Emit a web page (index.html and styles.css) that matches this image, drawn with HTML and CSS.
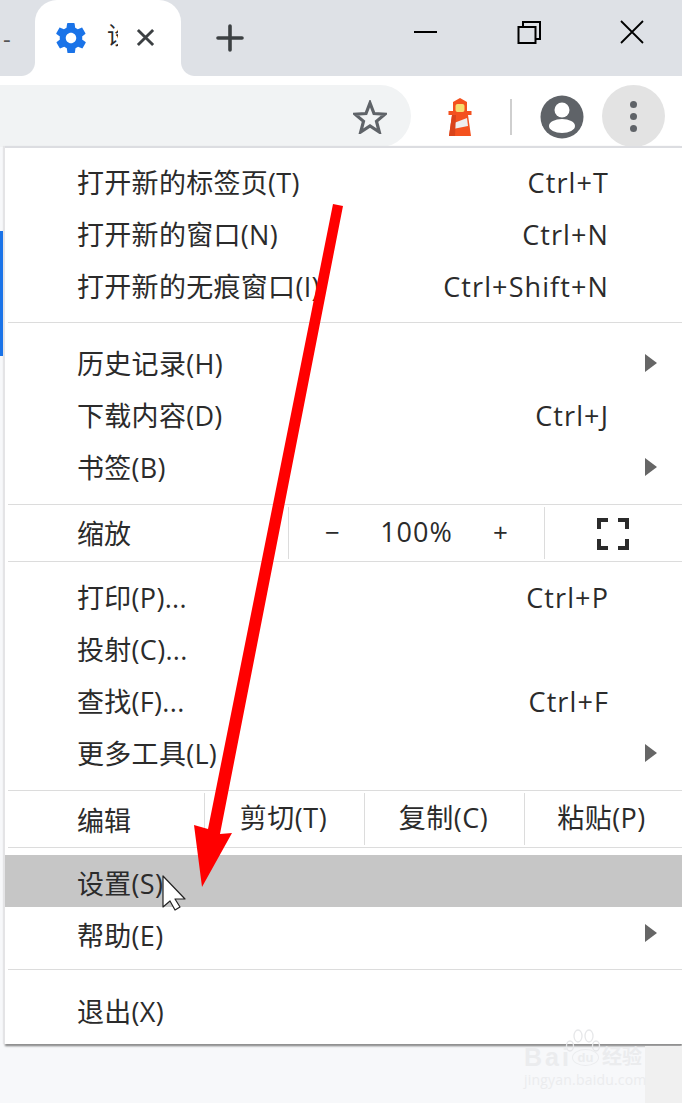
FILE: index.html
```html
<!DOCTYPE html>
<html lang="zh-CN">
<head>
  <meta charset="UTF-8">
  <title>Chrome 菜单</title>
  <link rel="stylesheet" href="styles.css">
</head>
<body>
  <div class="page">
    <div class="tabstrip">
      <div class="tab-stub">-</div>
      <div class="tab">
        <svg class="tab-gear" viewBox="0 0 24 24"><path fill="#1a73e8" d="M19.4 13c.1-.3.1-.7.1-1s0-.7-.1-1l2.100-1.600c.2-.2.2-.4.100-.6l-2-3.500c-.1-.2-.4-.3-.6-.2l-2.500 1c-.5-.4-1.100-.7-1.700-1l-.4-2.700c0-.2-.2-.4-.5-.4h-4c-.2 0-.4.2-.5.4l-.4 2.700c-.6.2-1.200.6-1.700 1l-2.500-1c-.2-.1-.5 0-.6.2l-2 3.500c-.1.2-.1.5.1.6L4.600 11c-.1.3-.1.700-.1 1s0 .7.1 1l-2.100 1.600c-.2.2-.2.4-.1.6l2 3.500c.1.2.4.3.6.2l2.500-1c.5.4 1.100.7 1.700 1l.4 2.700c0 .2.2.4.5.4h4c.2 0 .4-.2.5-.4l.4-2.700c.6-.2 1.200-.6 1.700-1l2.500 1c.2.1.5 0 .6-.2l2-3.500c.1-.2.1-.5-.1-.6zM12 15.500c-1.900 0-3.500-1.600-3.500-3.500s1.600-3.500 3.500-3.500 3.500 1.600 3.500 3.500-1.600 3.500-3.500 3.500z"/></svg>
        <span class="tab-title">设置</span>
        <svg class="tab-close" viewBox="0 0 20 20"><path d="M2 2l16 16M18 2L2 18" stroke="#3c4043" stroke-width="3"/></svg>
      </div>
      <svg class="new-tab" viewBox="0 0 28 28"><path d="M14 2v24M2 14h24" stroke="#3c4043" stroke-width="3.600" stroke-linecap="round"/></svg>
      <div class="win-btns">
        <svg class="win-btn" viewBox="0 0 24 24"><path d="M0 12h23" stroke="#000" stroke-width="2"/></svg>
        <svg class="win-btn" viewBox="0 0 24 24"><path d="M1.500 7h17v16h-17zM6 7V2h17v17h-4.500" fill="none" stroke="#000" stroke-width="2"/></svg>
        <svg class="win-btn" viewBox="0 0 24 24"><path d="M1 1l22 22M23 1L1 23" stroke="#000" stroke-width="1.800"/></svg>
      </div>
    </div>

    <div class="toolbar">
      <div class="omnibox">
        <svg class="star" viewBox="0 0 34 34"><path d="M17 3l4 10.500 11 .7-8.500 7.100 2.800 10.700L17 26l-9.300 6 2.800-10.700L2 14.200l11-.7z" fill="none" stroke="#5f6368" stroke-width="3.200"/></svg>
      </div>
      <svg class="lighthouse" viewBox="0 0 26 38">
        <path fill="#f4511e" d="M13 0l7 4v9h4.500v4H21l3 21H2l3-21H1.500v-4H6V4z"/>
        <rect x="8.500" y="6" width="9" height="8" rx="2" fill="#f6dd6e"/>
        <path fill="#eeeeee" d="M7 25l13-5 1 8-15 3z"/>
        <path fill="#d9431a" d="M5 17h4l-1 21H2z"/>
      </svg>
      <div class="tool-sep"></div>
      <svg class="avatar" viewBox="0 0 44 44"><circle cx="22" cy="22" r="21.500" fill="#5f6368"/><circle cx="22" cy="15" r="7.500" fill="#fff"/><ellipse cx="22" cy="31" rx="13" ry="7" fill="#fff"/></svg>
      <div class="menu-btn"><i></i><i></i><i></i></div>
    </div>

    <div class="menu">
      <div class="group first">
        <div class="item"><span>打开新的标签页(T)</span><span class="key">Ctrl+T</span></div>
        <div class="item"><span>打开新的窗口(N)</span><span class="key">Ctrl+N</span></div>
        <div class="item"><span>打开新的无痕窗口(I)</span><span class="key">Ctrl+Shift+N</span></div>
      </div>
      <div class="group history">
        <div class="item sub"><span>历史记录(H)</span></div>
        <div class="item"><span>下载内容(D)</span><span class="key">Ctrl+J</span></div>
        <div class="item sub"><span>书签(B)</span></div>
      </div>
      <div class="tool-row">
        <div class="tool-label">缩放</div>
        <div class="zoom-ctrl"><span class="zoom-sign">−</span><span class="zoom-value">100%</span><span class="zoom-sign">+</span></div>
        <div class="zoom-full">
          <svg viewBox="0 0 32 32"><path d="M2 11V2h9M21 2h9v9M2 21v9h9M21 30h9v-9" fill="none" stroke="#2b2b2b" stroke-width="4"/></svg>
        </div>
      </div>
      <div class="group print">
        <div class="item"><span>打印(P)...</span><span class="key">Ctrl+P</span></div>
        <div class="item"><span>投射(C)...</span></div>
        <div class="item"><span>查找(F)...</span><span class="key">Ctrl+F</span></div>
        <div class="item sub"><span>更多工具(L)</span></div>
      </div>
      <div class="tool-row edit-row">
        <div class="tool-label">编辑</div>
        <div class="edit-btn">剪切(T)</div>
        <div class="edit-btn">复制(C)</div>
        <div class="edit-btn paste">粘贴(P)</div>
      </div>
      <div class="group settings">
        <div class="item active"><span>设置(S)</span></div>
        <div class="item sub"><span>帮助(E)</span></div>
      </div>
      <div class="group last">
        <div class="item"><span>退出(X)</span></div>
      </div>
    </div>

    <div class="blue-edge"></div>
    <div class="corner-patch"></div>

    <div class="watermark">
      <svg class="paw" viewBox="0 0 36 30" fill="none" stroke="#e6e7e9" stroke-width="1.300">
        <ellipse cx="5" cy="17" rx="3.500" ry="5"/><ellipse cx="13" cy="7" rx="4" ry="6"/><ellipse cx="24" cy="7" rx="4" ry="6"/><ellipse cx="31" cy="17" rx="3.500" ry="5"/>
      </svg>
      <div class="wm-main"><span class="wm-bai">Bai</span><span class="wm-du">du</span><span>经验</span></div>
      <div class="wm-url">jingyan.baidu.com</div>
    </div>

    <svg class="annotation" viewBox="0 0 682 1103">
      <polygon fill="#ff0000" points="333,204 343,206 220,834 232,833 202,887 194,825 208,829"/>
    </svg>
    <svg class="cursor" viewBox="0 0 27 36"><path d="M1 1v31l7-6 5 9 5-3-5-8h10z" fill="#fff" stroke="#222" stroke-width="1.200" stroke-linejoin="round"/></svg>
  </div>
</body>
</html>
```

FILE: styles.css
```css
* {
  box-sizing: border-box;
}
html, body {
  margin: 0;
  padding: 0;
}
body {
  font-family: "Open Sans", "Noto Sans CJK SC", sans-serif;
  color: #2b2b2b;
}
.page {
  position: relative;
  width: 682px;
  height: 1103px;
  overflow: hidden;
  background: #f7f8fa;
}

/* tab strip */
.tabstrip {
  height: 76px;
  background: #dee1e6;
  display: flex;
  align-items: flex-start;
}
.tab-stub {
  width: 35px;
  padding: 20px 0 0 3px;
  font-size: 24px;
  line-height: 38px;
  color: #555;
}
.tab {
  width: 146px;
  height: 76px;
  background: #fff;
  border-radius: 22px 22px 0 0;
  display: flex;
  align-items: flex-start;
  position: relative;
}
/* concave feet either side of the active tab */
.tab::before, .tab::after {
  content: "";
  position: absolute;
  bottom: 0;
  width: 14px;
  height: 14px;
}
.tab::before {
  left: -14px;
  background: radial-gradient(circle at 0 0, #dee1e6 13.5px, #fff 14.5px);
}
.tab::after {
  right: -14px;
  background: radial-gradient(circle at 100% 0, #dee1e6 13.5px, #fff 14.5px);
}
.tab-gear {
  width: 36px;
  height: 36px;
  margin: 20px 0 0 18px;
}
.tab-title {
  width: 11px;
  margin: 17px 0 0 18px;
  overflow: hidden;
  white-space: nowrap;
  font-size: 24px;
  line-height: 36px;
}
.tab-close {
  width: 19px;
  height: 19px;
  margin: 28px 0 0 18px;
}
.new-tab {
  width: 28px;
  height: 28px;
  margin: 24px 0 0 35px;
}
.win-btns {
  margin-left: 170px;
  display: flex;
  gap: 79px;
  padding-top: 20px;
}
.win-btn {
  width: 24px;
  height: 24px;
}

/* toolbar */
.toolbar {
  height: 70px;
  background: #fff;
  display: flex;
  align-items: flex-start;
}
.omnibox {
  width: 411px;
  height: 62px;
  margin-top: 9px;
  background: #f1f3f4;
  border-radius: 0 31px 31px 0;
  display: flex;
  justify-content: flex-end;
}
.star {
  width: 34px;
  height: 34px;
  margin: 15px 24px 0 0;
}
.lighthouse {
  width: 26px;
  height: 38px;
  margin: 22px 0 0 36px;
}
.tool-sep {
  width: 2px;
  height: 36px;
  margin: 23px 0 0 37px;
  background: #cfcfcf;
}
.avatar {
  width: 44px;
  height: 44px;
  margin: 19px 0 0 28px;
}
.menu-btn {
  width: 63px;
  height: 62px;
  margin: 9px 0 0 18px;
  background: #e3e3e3;
  border-radius: 50%;
  display: flex;
  flex-direction: column;
  align-items: center;
  justify-content: center;
  gap: 5px;
}
.menu-btn i {
  width: 7px;
  height: 7px;
  border-radius: 50%;
  background: #5f6368;
}

/* menu */
.menu {
  position: relative;
  margin-left: 5px;
  height: 898px;
  background: #fff;
  border-top: 2px solid #dcdde1;
  box-shadow: -2px 0 1px #e4e4e6, 0 2px 2px #777;
  font-size: 27px;
}
.group {
  margin-left: 3px;
  border-bottom: 1px solid #dcdcdc;
}
.group.first {
  padding: 9px 0;
}
.group.history {
  padding: 15px 0 10px;
}
.group.print {
  padding: 10px 0 10px;
}
.group.settings {
  padding: 7px 0 10px;
}
.group.last {
  border-bottom: 0;
  padding-top: 15px;
}
.item {
  height: 52px;
  margin-left: -3px;
  padding: 0 72px;
  display: flex;
  justify-content: space-between;
  align-items: center;
  line-height: 52px;
  letter-spacing: .3px;
  white-space: nowrap;
  position: relative;
}
.group.settings .item {
  padding-top: 5px;
}
.group.last .item {
  padding-top: 2px;
}
.key {
  letter-spacing: 1.100px;
  margin-right: 1px;
}
.item.sub::after {
  content: "";
  position: absolute;
  right: 25px;
  top: 16px;
  border-left: 12px solid #666;
  border-top: 9px solid transparent;
  border-bottom: 9px solid transparent;
}
.group.settings .item.sub::after {
  top: 17px;
}
.item.active {
  background: #c6c6c6;
}
.tool-row {
  margin-left: 3px;
  height: 57px;
  display: flex;
  border-bottom: 1px solid #dcdcdc;
}
.tool-label {
  width: 280px;
  padding-left: 69px;
  line-height: 58px;
}
.zoom-ctrl {
  width: 257px;
  margin: 2px 0;
  border-left: 1px solid #dcdcdc;
  border-right: 1px solid #dcdcdc;
  display: flex;
  justify-content: space-between;
  padding: 0 36px;
  line-height: 50px;
}
.zoom-value {
  letter-spacing: 1px;
}
.zoom-sign {
  font-size: 26px;
}
.zoom-full {
  flex: 1;
  padding: 13px 0 0 52px;
}
.zoom-full svg {
  display: block;
  width: 32px;
  height: 32px;
}
.edit-row .tool-label {
  width: 196px;
  line-height: 60px;
}
.edit-btn {
  width: 160px;
  margin: 2px 0;
  padding-right: 2px;
  border-left: 1px solid #dcdcdc;
  text-align: center;
  line-height: 50px;
  letter-spacing: .5px;
  white-space: nowrap;
}
.edit-btn.paste {
  flex: 1;
  width: auto;
  padding-right: 4px;
}

/* overlays */
.blue-edge {
  position: absolute;
  left: 0;
  top: 231px;
  width: 3px;
  height: 125px;
  background: #1a73e8;
}
.corner-patch {
  position: absolute;
  left: 645px;
  top: 1046px;
  width: 37px;
  height: 57px;
  background: #f0f0f0;
}
.watermark {
  position: absolute;
  left: 524px;
  top: 1029px;
  width: 124px;
  color: #ebecee;
}
.paw {
  position: absolute;
  left: 41px;
  top: 0;
  width: 36px;
  height: 30px;
}
.wm-main {
  position: absolute;
  top: 16px;
  left: 0;
  display: flex;
  align-items: center;
  font-family: "Liberation Sans", "Noto Sans CJK SC", sans-serif;
  font-size: 20px;
  line-height: 24px;
  font-weight: bold;
  white-space: nowrap;
}
.wm-bai {
  font-size: 25px;
  letter-spacing: 3px;
}
.wm-du {
  width: 27px;
  height: 17px;
  margin-right: 3px;
  border: 1px solid #ebecee;
  border-radius: 50%;
  font-size: 13px;
  line-height: 15px;
  text-align: center;
}
.wm-url {
  position: absolute;
  top: 42px;
  left: 0;
  font-size: 14px;
  line-height: 18px;
  letter-spacing: .2px;
  white-space: nowrap;
}
.annotation {
  position: absolute;
  left: 0;
  top: 0;
  width: 682px;
  height: 1103px;
}
.cursor {
  position: absolute;
  left: 162px;
  top: 875px;
  width: 27px;
  height: 36px;
}
```
